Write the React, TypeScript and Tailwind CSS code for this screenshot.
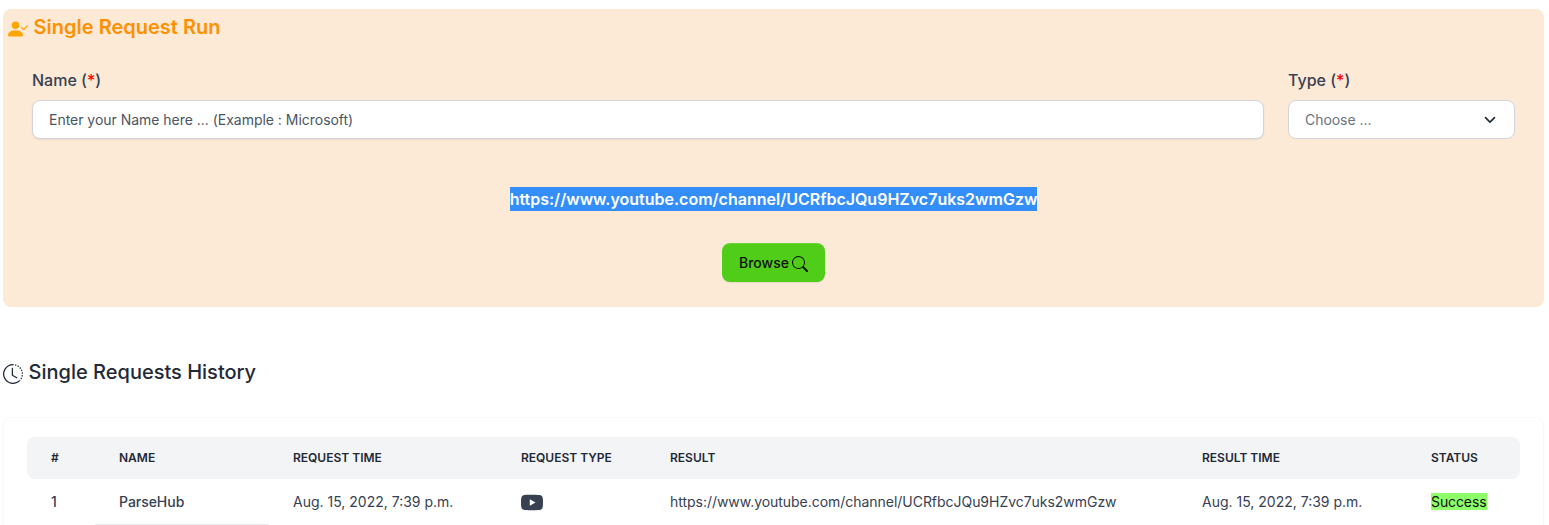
import type { ReactNode } from "react";
import { BsClockHistory, BsPersonCheckFill, BsSearch, BsYoutube } from "react-icons/bs";

const channelUrl = "https://www.youtube.com/channel/UCRfbcJQu9HZvc7uks2wmGzw";

const columns = ["#", "Name", "Request time", "Request type", "Result", "Result time", "Status"];

const rows = [
  { id: 1, name: "ParseHub", requested: "Aug. 15, 2022, 7:39 p.m.", result: channelUrl, finished: "Aug. 15, 2022, 7:39 p.m.", status: "Success" },
];

const rowGrid = "grid grid-cols-[68px_174px_228px_149px_532px_229px_113px]";

function Label({ children }: { children: ReactNode }) {
  return (
    <label className="mb-2 block text-[16px] leading-6 font-medium text-[#374151]">
      {children} (<span className="text-[#ff0000]">*</span>)
    </label>
  );
}

function RequestForm() {
  return (
    <section className="h-[298px] rounded-lg bg-[#fce9d6]">
      <h2 className="flex h-9 items-center pl-[5px] text-[20px] leading-[26px] font-semibold text-[#ff9100]">
        <BsPersonCheckFill className="mt-[3px] mr-[5.6px] size-5 text-[#ffa500]" />
        Single Request Run
      </h2>
      <div className="mt-[23px] flex gap-6 pr-[29px] pl-[29px]">
        <div className="w-[1232px]">
          <Label>Name</Label>
          <input
            className="block h-[39px] w-full rounded-lg border border-[#d1d5db] bg-white px-4 text-[14px] tracking-[-0.025px] text-[#4b5563] shadow-[0_1px_2px_rgba(0,0,0,0.07)] outline-none placeholder:text-[#4b5563] placeholder:opacity-100"
            placeholder="Enter your Name here ... (Example : Microsoft)"
          />
        </div>
        <div className="w-[227px]">
          <Label>Type</Label>
          <button className="flex h-[39px] w-full items-center justify-between rounded-lg border border-[#d1d5db] bg-white pr-[17px] pl-4 text-[14px] tracking-[-0.05px] text-[#6b7280]">
            Choose ...
            <svg viewBox="0 0 20 20" className="size-[14px]" fill="#1f2937">
              <path fillRule="evenodd" clipRule="evenodd" d="M2.8 5.8a1.2 1.2 0 0 1 1.7 0L10 11.3l5.5-5.5a1.2 1.2 0 0 1 1.7 1.7l-6.35 6.35a1.2 1.2 0 0 1-1.7 0L2.8 7.5a1.2 1.2 0 0 1 0-1.7z" />
            </svg>
          </button>
        </div>
      </div>
      <div className="mt-12 flex justify-center">
        <span className="bg-[#338ef9] text-[16px] leading-6 font-semibold text-white">{channelUrl}</span>
      </div>
      <div className="mt-8 flex justify-center">
        <button className="flex h-[39px] w-[103px] items-center justify-center gap-[3px] rounded-lg bg-[#50cd19] text-[14px] font-medium text-[#111111] shadow-[inset_0_1px_0_rgba(255,255,255,0.15),0_1px_1px_rgba(17,24,39,0.075)]">
          Browse
          <BsSearch className="mt-[2px] size-4" />
        </button>
      </div>
    </section>
  );
}

function HistoryTable() {
  return (
    <section className="mt-[27px] h-[140px] rounded-lg border border-[#f8f9fa] bg-white px-[23px] pt-[19px] shadow-[0_1px_2px_rgba(0,0,0,0.05)]">
      <div className={`${rowGrid} h-[42px] items-center rounded-lg bg-[#f2f4f6] text-[12px] font-semibold text-[#1f2937] uppercase`}>
        {columns.map((column) => (
          <div key={column} className="px-6 whitespace-nowrap">{column}</div>
        ))}
      </div>
      {rows.map((row) => (
        <div key={row.id} className={`${rowGrid} h-[46px] text-[14px] leading-[21px] tracking-[-0.035px] whitespace-nowrap text-[#374151] *:px-6 *:pt-3`}>
          <div className="font-medium">{row.id}</div>
          <div className="border-b border-[#e5e7eb] font-medium">{row.name}</div>
          <div className="tracking-normal">{row.requested}</div>
          <div><BsYoutube className="mt-px size-[22px]" /></div>
          <div>{row.result}</div>
          <div className="tracking-normal">{row.finished}</div>
          <div><mark className="bg-[#8dff69] tracking-[-0.1px] text-[#111111]">{row.status}</mark></div>
        </div>
      ))}
    </section>
  );
}

export default function App() {
  return (
    <main className="h-[525px] overflow-hidden bg-white pt-[9px] pr-[5px] pl-[3px] font-['Inter',sans-serif]">
      <RequestForm />
      <h2 className="mt-[52px] flex items-center text-[20px] leading-[26px] font-medium text-[#1f2937]">
        <BsClockHistory className="mt-[3px] mr-[5.6px] size-5" />
        Single Requests History
      </h2>
      <div className="pt-[5px]">
        <HistoryTable />
      </div>
    </main>
  );
}
